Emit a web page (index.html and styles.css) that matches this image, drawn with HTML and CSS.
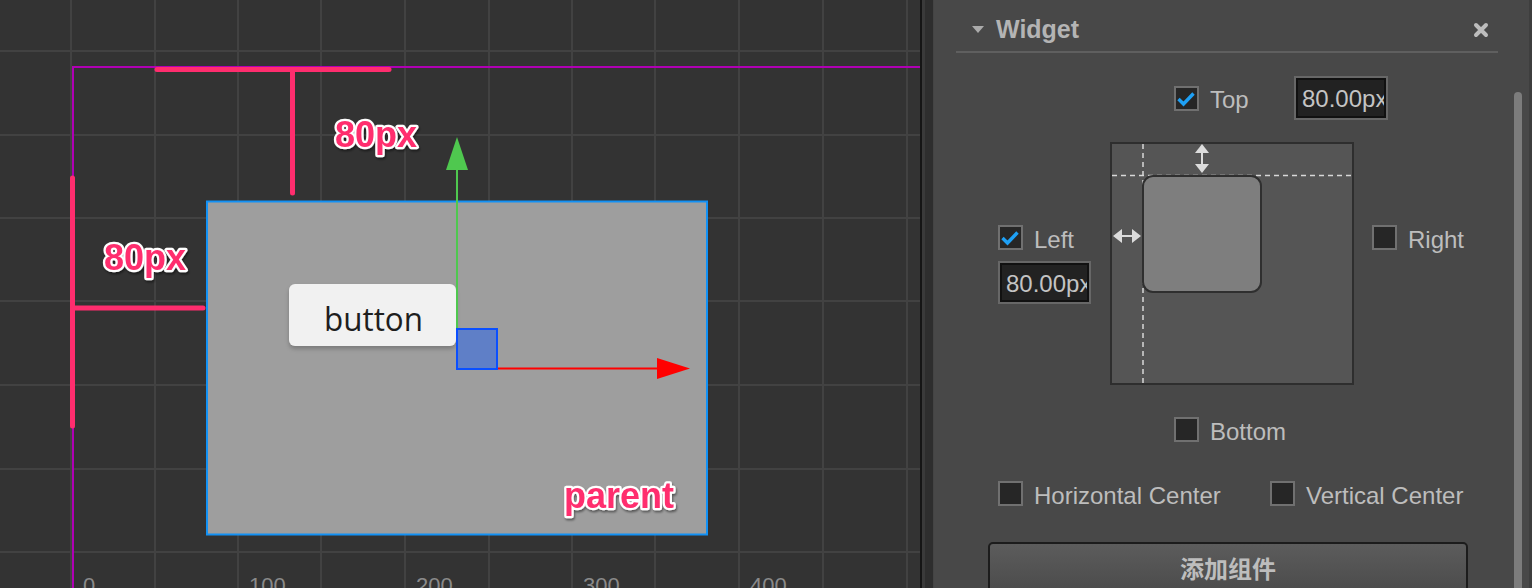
FILE: index.html
```html
<!DOCTYPE html>
<html lang="en">
<head>
<meta charset="utf-8">
<title>Widget</title>
<link rel="stylesheet" href="styles.css">
</head>
<body>
<div class="app">
  <div class="scene">
    <svg class="scene-svg" width="920" height="588" viewBox="0 0 920 588">
      <defs>
        <filter id="ts" x="-15%" y="-25%" width="140%" height="160%">
          <feDropShadow dx="1" dy="2" stdDeviation="1" flood-color="#000" flood-opacity="0.45"/>
        </filter>
        <filter id="bs" x="-10%" y="-10%" width="120%" height="140%">
          <feDropShadow dx="0" dy="3" stdDeviation="2" flood-color="#000" flood-opacity="0.22"/>
        </filter>
      </defs>
      <rect width="920" height="588" fill="#333333"/>
      <g fill="#424242">
        <rect x="70" y="0" width="2" height="588"/>
        <rect x="154" y="0" width="2" height="588"/>
        <rect x="237" y="0" width="2" height="588"/>
        <rect x="320" y="0" width="2" height="588"/>
        <rect x="404" y="0" width="2" height="588"/>
        <rect x="488" y="0" width="2" height="588"/>
        <rect x="571" y="0" width="2" height="588"/>
        <rect x="654" y="0" width="2" height="588"/>
        <rect x="738" y="0" width="2" height="588"/>
        <rect x="822" y="0" width="2" height="588"/>
        <rect x="906" y="0" width="2" height="588"/>
        <rect x="0" y="50" width="920" height="2"/>
        <rect x="0" y="134" width="920" height="2"/>
        <rect x="0" y="217" width="920" height="2"/>
        <rect x="0" y="300" width="920" height="2"/>
        <rect x="0" y="384" width="920" height="2"/>
        <rect x="0" y="468" width="920" height="2"/>
        <rect x="0" y="551" width="920" height="2"/>
      </g>
      <g fill="#b000b4">
        <rect x="72" y="66" width="848" height="2"/>
        <rect x="72" y="66" width="2" height="522"/>
      </g>
      <g stroke="#ff2d6e" stroke-width="5" stroke-linecap="round" fill="none">
        <line x1="157" y1="69.5" x2="389" y2="69.5"/>
        <line x1="292.5" y1="72" x2="292.5" y2="193"/>
        <line x1="72.5" y1="178" x2="72.5" y2="426"/>
        <line x1="74" y1="308" x2="203" y2="308"/>
      </g>
      <rect x="207" y="201.5" width="500" height="333" fill="#9e9e9e" stroke="#1291f5" stroke-width="2"/>
      <rect x="289" y="284" width="167" height="62" rx="6" fill="#f1f1f1" filter="url(#bs)"/>
      <text x="324" y="331" class="btn-text" textLength="99" lengthAdjust="spacingAndGlyphs">button</text>
      <line x1="457" y1="165" x2="457" y2="329" stroke="#4fc84f" stroke-width="2"/>
      <polygon points="446,170 468,170 457,137" fill="#4fc84f"/>
      <line x1="497" y1="368.5" x2="660" y2="368.5" stroke="#ff0000" stroke-width="2"/>
      <polygon points="657,358 690,368.5 657,379" fill="#ff0000"/>
      <rect x="457" y="329" width="40" height="40" fill="#5f7fc7" stroke="#0a4fff" stroke-width="2"/>
      <text x="335" y="147" class="tag" filter="url(#ts)">80px</text>
      <text x="104" y="270" class="tag" filter="url(#ts)">80px</text>
      <text x="564" y="508" class="tag" filter="url(#ts)">parent</text>
      <g class="axis">
        <text x="83" y="593">0</text>
        <text x="249" y="593">100</text>
        <text x="416" y="593">200</text>
        <text x="583" y="593">300</text>
        <text x="750" y="593">400</text>
      </g>
    </svg>
  </div>
  <div class="divider"></div>
  <div class="panel">
    <div class="section">
      <div class="sec-head">
        <span class="caret"></span>
        <span class="sec-title">Widget</span>
        <svg class="close" width="16" height="16" viewBox="0 0 16 16"><path d="M3 3 L13 13 M13 3 L3 13" stroke="#bdbdbd" stroke-width="4" stroke-linecap="round"/></svg>
      </div>
      <div class="sec-body">
        <div class="row-top">
          <span class="cb"><svg class="tick" width="21" height="21" viewBox="0 0 21 21"><path d="M2.5 11 L7.5 16 L17.5 5.5" fill="none" stroke="#1ea0f5" stroke-width="3.4"/></svg></span>
          <span class="lbl lbl-top">Top</span>
          <span class="num"><span class="num-in">80.00px</span></span>
        </div>
        <div class="row-mid">
          <div class="col-left">
            <div class="check">
              <span class="cb"><svg class="tick" width="21" height="21" viewBox="0 0 21 21"><path d="M2.5 11 L7.5 16 L17.5 5.5" fill="none" stroke="#1ea0f5" stroke-width="3.4"/></svg></span>
              <span class="lbl">Left</span>
            </div>
            <span class="num num-left"><span class="num-in">80.00px</span></span>
          </div>
          <svg class="diagram" width="244" height="243" viewBox="0 0 244 243">
            <rect x="1" y="1" width="242" height="241" fill="#555555" stroke="#2e2e2e" stroke-width="2"/>
            <g stroke="#d8d8d8" stroke-width="1.5" stroke-dasharray="5 4" fill="none">
              <line x1="2" y1="33.5" x2="242" y2="33.5"/>
              <line x1="33" y1="2" x2="33" y2="241"/>
            </g>
            <rect x="33" y="34" width="118" height="116" rx="10" fill="#7e7e7e" stroke="#2f2f2f" stroke-width="2"/>
            <g fill="#dcdcdc">
              <rect x="91" y="10" width="2" height="13"/>
              <polygon points="85,11 99,11 92,2"/>
              <polygon points="85,22 99,22 92,31"/>
              <rect x="11" y="93" width="13" height="2"/>
              <polygon points="3,94 12,87 12,101"/>
              <polygon points="31,94 22,87 22,101"/>
            </g>
          </svg>
          <div class="col-right">
            <div class="check">
              <span class="cb"></span>
              <span class="lbl">Right</span>
            </div>
          </div>
        </div>
        <div class="row-bottom">
          <div class="check">
            <span class="cb"></span>
            <span class="lbl">Bottom</span>
          </div>
        </div>
        <div class="row-center">
          <div class="check hc">
            <span class="cb"></span>
            <span class="lbl">Horizontal Center</span>
          </div>
          <div class="check">
            <span class="cb"></span>
            <span class="lbl">Vertical Center</span>
          </div>
        </div>
      </div>
      <div class="add-btn">添加组件</div>
    </div>
    <div class="scrollbar"></div>
  </div>
</div>
</body>
</html>
```

FILE: styles.css
```css
html, body {
  margin: 0;
  padding: 0;
  background: #333333;
  overflow: hidden;
}

.app {
  display: flex;
  width: 1532px;
  height: 588px;
  font-family: "Liberation Sans", Arial, sans-serif;
}

.scene {
  width: 920px;
  height: 588px;
  flex: none;
}

.scene-svg {
  display: block;
}

.btn-text {
  font-family: "Open Sans", "DejaVu Sans", sans-serif;
  font-size: 32px;
  fill: #1e1e1e;
}

.tag {
  font-family: "Liberation Sans", Arial, sans-serif;
  font-weight: bold;
  font-size: 36px;
  fill: #ff2d6e;
  stroke: #ffffff;
  stroke-width: 4.5px;
  stroke-linejoin: round;
  paint-order: stroke;
}

.axis text {
  font-family: "Liberation Sans", Arial, sans-serif;
  font-size: 22px;
  fill: #8a8a8a;
}

.divider {
  width: 14px;
  flex: none;
  background: linear-gradient(to right, #151515 0 2px, #3a3a3a 2px 5px, #2e2e2e 5px 13px, #444444 13px 14px);
}

.panel {
  flex: 1;
  display: flex;
  background: #484848;
  border-right: 3px solid #3e3e3e;
}

.section {
  width: 542px;
  margin-left: 22px;
  flex: none;
}

.sec-head {
  height: 53px;
  box-sizing: border-box;
  padding: 8px 9px 0 16px;
  display: flex;
  align-items: center;
  border-bottom: 2px solid #5f5f5f;
}

.caret {
  width: 0;
  height: 0;
  border-left: 6.5px solid transparent;
  border-right: 6.5px solid transparent;
  border-top: 7px solid #ababab;
}

.sec-title {
  margin-left: 12px;
  font-size: 25px;
  font-weight: bold;
  line-height: 1;
  color: #b4b4b4;
}

.close {
  margin-left: auto;
  display: block;
}

.sec-body {
  padding-left: 42px;
}

.row-top {
  margin-top: 23px;
  height: 44px;
  padding-left: 176px;
  display: flex;
  align-items: center;
}

.cb {
  width: 25px;
  height: 25px;
  box-sizing: border-box;
  border: 2px solid #707070;
  background: #262626;
  flex: none;
  display: block;
}

.tick {
  display: block;
}

.lbl {
  margin-left: 11px;
  padding-top: 3px;
  font-size: 24px;
  line-height: 25px;
  color: #bdbdbd;
  white-space: nowrap;
}

.lbl-top {
  width: 84px;
}

.num {
  width: 94px;
  height: 44px;
  box-sizing: border-box;
  border: 2px solid #676767;
  background: #111111;
  padding: 2px;
  flex: none;
  display: block;
}

.num-in {
  display: block;
  height: 100%;
  background: #222222;
  overflow: hidden;
  white-space: nowrap;
  padding-left: 4px;
  font-size: 24px;
  line-height: 38px;
  color: #c4c4c4;
}

.num-left {
  width: 93px;
  height: 43px;
  margin-top: 11px;
}

.num-left .num-in {
  line-height: 37px;
}

.row-mid {
  margin-top: 22px;
  display: flex;
}

.col-left {
  width: 112px;
  padding-top: 83px;
  flex: none;
}

.check {
  display: flex;
  align-items: center;
  height: 25px;
}

.diagram {
  display: block;
  flex: none;
}

.col-right {
  padding-top: 83px;
  padding-left: 18px;
}

.row-bottom {
  margin-top: 32px;
  padding-left: 176px;
}

.row-center {
  margin-top: 39px;
  display: flex;
}

.hc {
  width: 272px;
}

.add-btn {
  margin: 36px 0 0 32px;
  width: 480px;
  height: 52px;
  box-sizing: border-box;
  border: 2px solid #1c1c1c;
  border-radius: 5px;
  background: linear-gradient(#5c5c5c, #4b4b4b);
  padding-top: 6px;
  text-align: center;
  font-family: "Noto Sans CJK SC", "Liberation Sans", sans-serif;
  font-weight: bold;
  font-size: 24px;
  line-height: 36px;
  color: #bdbdbd;
}

.scrollbar {
  width: 8px;
  margin-left: 16px;
  margin-top: 92px;
  background: #7c7c7c;
  border-radius: 4px 4px 0 0;
  flex: none;
}
```
